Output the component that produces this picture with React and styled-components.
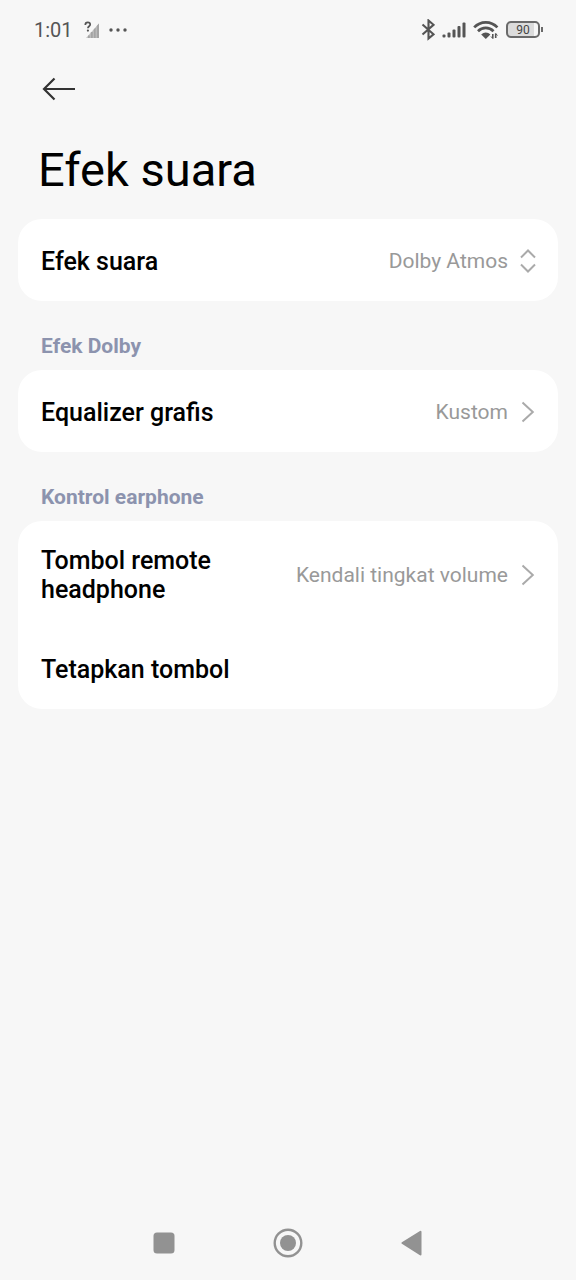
import React, { useState } from "react";
import styled, { createGlobalStyle } from "styled-components";

function App() {
  const [effect, setEffect] = useState("Dolby Atmos");
  return (
    <>
      <GlobalStyle />
      <Page>
        <StatusBar>
          <StatusGroup>
            <Clock>1:01</Clock>
            <NoSimIcon />
            <DotsIcon />
          </StatusGroup>
          <StatusGroup>
            <BluetoothIcon />
            <SignalIcon />
            <WifiIcon />
            <Battery>
              <BatteryBody>90</BatteryBody>
              <BatteryTip />
            </Battery>
          </StatusGroup>
        </StatusBar>

        <TopBar>
          <BackButton type="button" aria-label="Kembali">
            <svg width="34" height="26" viewBox="0 0 34 26" fill="none">
              <path
                d="M12.5 2.5L2 13l10.5 10.5M2 13h31"
                stroke="#333"
                strokeWidth="2.2"
              />
            </svg>
          </BackButton>
        </TopBar>

        <Main>
          <Title>Efek suara</Title>
          <Card>
            <Row as="div">
              <Label as="label" htmlFor="effect">
                Efek suara
              </Label>
              <Select
                id="effect"
                value={effect}
                onChange={(e) => setEffect(e.target.value)}
              >
                <option>Dolby Atmos</option>
                <option>Mi Sound</option>
              </Select>
              <UpDownIcon />
            </Row>
          </Card>

          <SectionTitle>Efek Dolby</SectionTitle>
          <Card>
            <Row type="button">
              <Label>Equalizer grafis</Label>
              <Value>Kustom</Value>
              <ChevronIcon />
            </Row>
          </Card>

          <SectionTitle>Kontrol earphone</SectionTitle>
          <Card>
            <Row type="button">
              <Label>Tombol remote headphone</Label>
              <Value>Kendali tingkat volume</Value>
              <ChevronIcon />
            </Row>
            <Row type="button">
              <Label>Tetapkan tombol</Label>
            </Row>
          </Card>
        </Main>

        <NavBar>
          <NavButton type="button" aria-label="Aplikasi terbaru">
            <svg width="30" height="30" viewBox="0 0 30 30">
              <rect x="4.5" y="4.5" width="21" height="21" rx="3.5" fill="#929292" />
            </svg>
          </NavButton>
          <NavButton type="button" aria-label="Beranda">
            <svg width="30" height="30" viewBox="0 0 30 30">
              <circle cx="15" cy="15" r="13.3" fill="none" stroke="#929292" strokeWidth="2.4" />
              <circle cx="15" cy="15" r="8" fill="#929292" />
            </svg>
          </NavButton>
          <NavButton type="button" aria-label="Kembali">
            <svg width="30" height="30" viewBox="0 0 30 30">
              <path
                d="M5.4 15L23.5 3.8v22.6z"
                fill="#929292"
                stroke="#929292"
                strokeWidth="2"
                strokeLinejoin="round"
              />
            </svg>
          </NavButton>
        </NavBar>
      </Page>
    </>
  );
}

function NoSimIcon() {
  return (
    <svg width="16" height="18" viewBox="0 0 16 18" fill="none">
      <path d="M2 17L15 2.5V17z" fill="#c4c4c4" />
      <path
        d="M4 17v-2.5h1.8V17zM6.8 17v-6h2v6zM9.7 17V8.5l2-2V17zM12.7 17V5l2.3-2.5V17z"
        fill="#a4a4a4"
      />
      <path
        d="M1.3 4c0-3.6 4.9-3.2 4.9-.4 0 1.7-2.3 1.7-2.3 3.7"
        stroke="#555"
        strokeWidth="1.7"
      />
      <circle cx="3.9" cy="9.6" r="1.1" fill="#555" />
    </svg>
  );
}

function DotsIcon() {
  return (
    <svg width="20" height="4" viewBox="0 0 20 4" fill="#555">
      <circle cx="4" cy="2" r="1.7" />
      <circle cx="11" cy="2" r="1.7" />
      <circle cx="18" cy="2" r="1.7" />
    </svg>
  );
}

function BluetoothIcon() {
  return (
    <svg width="14" height="22" viewBox="0 0 14 22" fill="none">
      <path
        d="M1.5 5.5l11 9.8-5 4.2v-18l5 4.3-11 9.7"
        stroke="#555"
        strokeWidth="2.1"
      />
    </svg>
  );
}

function SignalIcon() {
  return (
    <svg width="24" height="18" viewBox="0 0 24 18" fill="#555">
      <rect x="0.5" y="13.5" width="3" height="3" rx="1" />
      <rect x="5.5" y="11.5" width="3" height="5" rx="1" />
      <rect x="10.5" y="8.5" width="3" height="8" rx="1" />
      <rect x="15.5" y="5" width="3" height="11.5" rx="1" />
      <rect x="20.5" y="1.5" width="3" height="15" rx="1" />
    </svg>
  );
}

function WifiIcon() {
  return (
    <svg width="26" height="20" viewBox="0 0 26 20" fill="none">
      <path
        d="M1.2 7.4c6.3-6.8 16.9-6.8 23.2 0M5 11.2c4.3-4.4 11.2-4.4 15.5 0"
        stroke="#555"
        strokeWidth="2.7"
      />
      <path d="M8.2 14.4c2.6-2.7 6.6-2.7 9.2 0l-4.6 4.6z" fill="#555" />
      <path d="M19.8 14v4.5M22.7 13.5V18" stroke="#555" strokeWidth="1.6" />
      <path d="M18 16.5l1.8 2M24.5 15.5l-1.8-2" stroke="#555" />
    </svg>
  );
}

function UpDownIcon() {
  return (
    <svg width="16" height="24" viewBox="0 0 16 24" fill="none">
      <path
        d="M1 8.5l7-7 7 7M1 15.5l7 7 7-7"
        stroke="#aaa"
        strokeWidth="2"
      />
    </svg>
  );
}

function ChevronIcon() {
  return (
    <svg width="16" height="22" viewBox="0 0 16 22" fill="none">
      <path d="M2.5 1.5L12.8 11 2.5 20.5" stroke="#aaa" strokeWidth="2" />
    </svg>
  );
}

const GlobalStyle = createGlobalStyle`
  body {
    margin: 0;
    background: #f7f7f7;
    font-family: Roboto, "Noto Sans", sans-serif;
  }
  button,
  select {
    font-family: inherit;
  }
`;

const Page = styled.div`
  display: flex;
  flex-direction: column;
  min-height: 100vh;
`;

const StatusBar = styled.header`
  display: flex;
  align-items: center;
  justify-content: space-between;
  height: 59px;
  padding: 0 33px 0 34px;
`;

const StatusGroup = styled.div`
  display: flex;
  align-items: center;
  gap: 7px;
`;

const Clock = styled.span`
  margin-right: 4px;
  font-size: 20px;
  color: #555;
`;

const Battery = styled.div`
  display: flex;
  align-items: center;
  gap: 1px;
`;

const BatteryBody = styled.div`
  width: 30px;
  height: 13px;
  border: 2px solid #6a6a6a;
  border-radius: 5px;
  background: linear-gradient(90deg, #dcdcdc 88%, #f7f7f7 88%);
  font-size: 12px;
  line-height: 14px;
  text-align: center;
  color: #444;
`;

const BatteryTip = styled.div`
  width: 2px;
  height: 5px;
  background: #6a6a6a;
`;

const TopBar = styled.div`
  display: flex;
  align-items: center;
  height: 60px;
  padding: 0 42px;
`;

const BackButton = styled.button`
  display: flex;
  padding: 0;
  border: 0;
  background: none;
`;

const Main = styled.main`
  flex: 1;
  padding: 0 18px;
`;

const Title = styled.h1`
  margin: 0;
  padding: 23px 20px 21px;
  font-size: 47px;
  font-weight: 400;
  line-height: 56px;
  color: #000;
`;

const SectionTitle = styled.h2`
  margin: 0;
  padding: 33px 23px 12px;
  font-size: 21px;
  font-weight: 700;
  line-height: 24px;
  color: #8c93ae;
`;

const Card = styled.section`
  border-radius: 24px;
  background: #fff;
  overflow: hidden;
`;

const Row = styled.button`
  display: flex;
  align-items: center;
  box-sizing: border-box;
  width: 100%;
  min-height: 82px;
  padding: 25px 22px 23px 23px;
  border: 0;
  background: none;
  text-align: left;
`;

const Label = styled.span`
  flex: 1;
  font-size: 25px;
  font-weight: 500;
  line-height: 29px;
  color: #000;
`;

const Value = styled.span`
  margin-right: 12px;
  font-size: 21px;
  line-height: 29px;
  color: #999;
`;

const Select = styled.select`
  appearance: none;
  margin: 0 12px 0 0;
  padding: 0;
  border: 0;
  background: none;
  font-size: 21px;
  line-height: 29px;
  text-align: right;
  text-align-last: right;
  color: #999;
`;

const NavBar = styled.nav`
  display: flex;
  justify-content: center;
  gap: 9px;
  height: 74px;
`;

const NavButton = styled.button`
  display: flex;
  align-items: center;
  justify-content: center;
  width: 20%;
  padding: 0;
  border: 0;
  background: none;
`;

export default App;
